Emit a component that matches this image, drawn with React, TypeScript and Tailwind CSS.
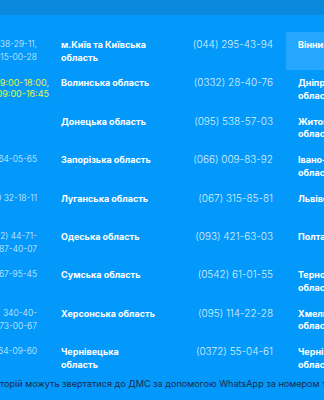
const rows = [
    { left: ['(044) 284-08-96, (044) 138-29-11,', '(044) 915-00-28'], region: ['м.Київ та Київська', 'область'], phone: '(044) 295-43-94', next: ['Вінницька область'], active: true },
    { left: ['Пн-Чт 09:00-18:00,', 'Пт 09:00-16:45'], yellow: true, region: ['Волинська область'], phone: '(0332) 28-40-76', next: ['Дніпропетровська', 'область'] },
    { left: [], region: ['Донецька область'], phone: '(095) 538-57-03', next: ['Житомирська', 'область'] },
    { left: ['(0612) 764-05-65'], region: ['Запорізька область'], phone: '(066) 009-83-92', next: ['Івано-Франківська', 'область'] },
    { left: ['(0642) 50 32-18-11'], region: ['Луганська область'], phone: '(067) 315-85-81', next: ['Львівська область'] },
    { left: ['(0512) 44-71-', '(048) 787-40-07'], region: ['Одеська область'], phone: '(093) 421-63-03', next: ['Полтавська область'] },
    { left: ['(0542) 667-95-45'], region: ['Сумська область'], phone: '(0542) 61-01-55', next: ['Тернопільська', 'область'] },
    { left: ['(0552) 340-40-', '(095) 373-00-67'], region: ['Херсонська область'], phone: '(095) 114-22-28', next: ['Хмельницька', 'область'] },
    { left: ['(0372) 564-09-60'], region: ['Чернівецька', 'область'], phone: '(0372) 55-04-61', next: ['Чернігівська', 'область'] },
];

export default function App() {
    return (
        <div className="w-[324px] h-[400px] overflow-hidden bg-[#0399fb] font-['Inter','Noto_Sans',sans-serif]">
            <div className="h-[15px] bg-[#0a89dc]" />
            <div className="pt-[17px]">
                {rows.map((row, i) => (
                    <div key={i} className="flex h-[38.4px]">
                        <div className="w-[61px] shrink-0 overflow-hidden flex justify-end pt-[6px]">
                            <div
                                className={
                                    row.yellow
                                        ? 'whitespace-nowrap text-right text-[9px] leading-[11px] text-[#e6f24a] pr-[12px] pt-[1px]'
                                        : 'whitespace-nowrap text-right text-[8.5px] font-light leading-[13px] text-[#dcefff] pr-[24px]'
                                }
                            >
                                {row.left.map((l, j) => (
                                    <div key={j}>{l}</div>
                                ))}
                            </div>
                        </div>
                        <div className="w-[100px] shrink-0 pt-[7px] text-[9px] font-bold leading-[12.5px] text-white whitespace-nowrap">
                            {row.region.map((l, j) => (
                                <div key={j}>{l}</div>
                            ))}
                        </div>
                        <div className="w-[125px] shrink-0 pt-[6px] pr-[13px] text-right text-[10px] font-light leading-[13px] text-[#dcefff] whitespace-nowrap">
                            {row.phone}
                        </div>
                        <div
                            className={
                                'flex-1 pl-[12px] pt-[7px] text-[9px] font-bold leading-[12.5px] text-white whitespace-nowrap overflow-hidden ' +
                                (row.active ? 'bg-[#25a6ff]' : '')
                            }
                        >
                            {row.next.map((l, j) => (
                                <div key={j}>{l}</div>
                            ))}
                        </div>
                    </div>
                ))}
            </div>
            <p className="flex whitespace-nowrap text-[9.1px] leading-[12px] text-[#1c2b4d]">
                <span className="w-0 flex justify-end">Мешканці тимчасово окупованих тери</span>
                <span>торій можуть звертатися до ДМС за допомогою WhatsApp за номером телефону</span>
            </p>
        </div>
    );
}
